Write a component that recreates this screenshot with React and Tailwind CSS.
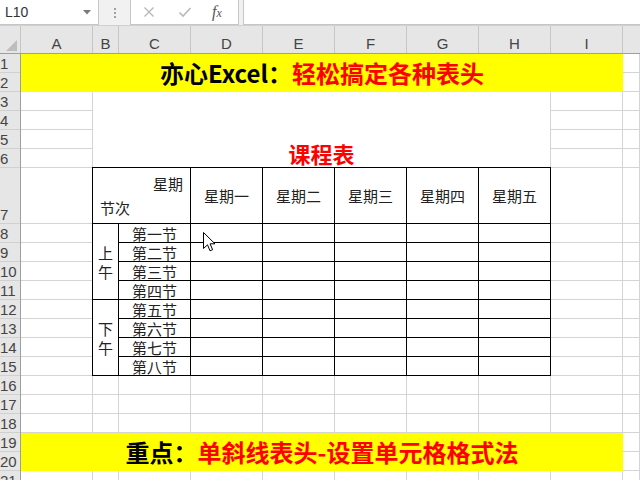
import React from 'react';

const colHeads = [
  { label: 'A', w: 'w-[72px]' },
  { label: 'B', w: 'w-[26px]' },
  { label: 'C', w: 'w-[72px]' },
  { label: 'D', w: 'w-[72px]' },
  { label: 'E', w: 'w-[72px]' },
  { label: 'F', w: 'w-[72px]' },
  { label: 'G', w: 'w-[72px]' },
  { label: 'H', w: 'w-[72px]' },
  { label: 'I', w: 'w-[72px]' },
];

const rowNums = Array.from({ length: 21 }, (_, i) => i + 1);
const days = ['星期一', '星期二', '星期三', '星期四', '星期五'];
const morning = ['第一节', '第二节', '第三节', '第四节'];
const afternoon = ['第五节', '第六节', '第七节', '第八节'];

// cells of the sheet not covered by merged blocks
const FILLERS = 83;

const TableBlock = () => (
  <div className="col-start-2 col-span-7 row-start-7 row-span-9 -ml-px -mt-px z-10 border-l border-t border-black bg-white grid grid-cols-[26px_repeat(6,72px)] grid-rows-[56px_repeat(8,19px)] text-[15px] text-[#222]">
    {/* header cell, no diagonal yet */}
    <div className="col-span-2 border-r border-b border-black flex flex-col justify-between px-[7px] pt-[8px] pb-[8px] leading-none">
      <span className="self-end">星期</span>
      <span className="self-start">节次</span>
    </div>
    {days.map(d => (
      <div key={d} className="border-r border-b border-black flex items-center justify-center leading-none">{d}</div>
    ))}

    <div className="col-start-1 row-start-2 row-span-4 border-r border-b border-black flex flex-col items-center justify-center leading-[19px]">
      <span>上</span>
      <span>午</span>
    </div>
    <div className="col-start-1 row-start-6 row-span-4 border-r border-b border-black flex flex-col items-center justify-center leading-[19px]">
      <span>下</span>
      <span>午</span>
    </div>

    {[...morning, ...afternoon].map(p => (
      <React.Fragment key={p}>
        <div className="col-start-2 border-r border-b border-black flex items-center justify-center leading-none pt-px">{p}</div>
        {days.map(d => <div key={d} className="border-r border-b border-black" />)}
      </React.Fragment>
    ))}
  </div>
);

const App = () => {
  return (
    <div className="relative w-[640px] h-[480px] overflow-hidden bg-white font-['Liberation_Sans','Noto_Sans_CJK_SC',sans-serif]">
      {/* formula bar */}
      <div className="h-[25px] bg-[#f1f1f1] flex">
        <div className="w-[99px] bg-white border-r border-b border-[#c6c6c6] flex items-center pl-[5px] text-[14px] text-[#333]">
          <span className="flex-1">L10</span>
          <svg width="8" height="5" viewBox="0 0 8 5" className="mr-[7px]">
            <path d="M0 0 L8 0 L4 4.5 Z" fill="#7a7a7a" />
          </svg>
        </div>
        <div className="w-[31px] flex flex-col items-center justify-center gap-[2px]">
          <span className="w-[2px] h-[2px] bg-[#a0a0a0]" />
          <span className="w-[2px] h-[2px] bg-[#a0a0a0]" />
          <span className="w-[2px] h-[2px] bg-[#a0a0a0]" />
        </div>
        <div className="w-[109px] bg-white border-l border-r border-b border-[#c6c6c6] flex items-center">
          <svg width="12" height="12" viewBox="0 0 12 12" className="ml-[12px]">
            <path d="M1.5 1.5 L10.5 10.5 M10.5 1.5 L1.5 10.5" stroke="#b9b9b9" strokeWidth="1.4" fill="none" />
          </svg>
          <svg width="14" height="12" viewBox="0 0 14 12" className="ml-[23px]">
            <path d="M1.5 6.5 L5 10 L12.5 2" stroke="#b9b9b9" strokeWidth="1.6" fill="none" />
          </svg>
          <span className="ml-[20px] font-['Liberation_Serif',serif] italic text-[16px] text-[#555] leading-none">
            f<span className="text-[12px]">x</span>
          </span>
        </div>
        <div className="w-[4px]" />
        <div className="flex-1 bg-white border-l border-b border-[#c6c6c6]" />
      </div>

      {/* column headers */}
      <div className="flex h-[29px] bg-[#e6e6e6] border-t border-b border-t-[#d0d0d0] border-b-[#9e9e9e] text-[15px] text-[#444] leading-none">
        <div className="w-[21px] border-r border-[#c6c6c6] flex items-end justify-end pr-[3px] pb-[2px]">
          <svg width="11" height="11" viewBox="0 0 11 11">
            <path d="M11 0 L11 11 L0 11 Z" fill="#bdbdbd" />
          </svg>
        </div>
        {colHeads.map(c => (
          <div key={c.label} className={`${c.w} border-r border-[#c6c6c6] flex items-end justify-center pb-[2px]`}>{c.label}</div>
        ))}
        <div className="flex-1" />
      </div>

      {/* body */}
      <div className="flex">
        <div className="w-[21px] shrink-0 bg-[#e6e6e6] border-r border-[#9e9e9e] text-[15px] text-[#444] leading-none">
          {rowNums.map(n => (
            <div key={n} className={`${n === 7 ? 'h-[56px]' : 'h-[19px]'} border-b border-[#d0d0d0] flex items-end pb-px`}>{n}</div>
          ))}
        </div>

        <div className="flex-1 grid grid-cols-[72px_26px_72px_72px_72px_72px_72px_72px_72px_1fr] grid-rows-[repeat(6,19px)_56px_repeat(14,19px)] font-['Noto_Sans_CJK_SC',sans-serif]">
          {Array.from({ length: FILLERS }, (_, i) => (
            <div key={i} className="border-r border-b border-[#d4d4d4]" />
          ))}

          <div className="col-start-1 col-span-9 row-start-1 row-span-2 bg-[#ffff00] flex items-center justify-center text-[24px] font-bold leading-none">
            <span className="text-black">亦心Excel：</span>
            <span className="text-[#ff0000]">轻松搞定各种表头</span>
          </div>

          <div className="col-start-2 col-span-7 row-start-3 row-span-4 bg-white border-r border-b border-[#d4d4d4] flex items-end justify-center pb-[3px] text-[22px] font-bold text-[#ff0000] leading-none">
            课程表
          </div>

          <TableBlock />

          <div className="col-start-1 col-span-9 row-start-19 row-span-2 bg-[#ffff00] flex items-center justify-center text-[24px] font-bold leading-none">
            <span className="text-black">重点：</span>
            <span className="text-[#ff0000]">单斜线表头-设置单元格格式法</span>
          </div>
        </div>
      </div>

      {/* mouse pointer */}
      <svg width="13" height="20" viewBox="0 0 13 20" className="absolute left-[203px] top-[232px] z-20">
        <path d="M0.5 0.5 L0.5 16.5 L4.5 12.8 L7 18.8 L9.6 17.7 L7.1 11.8 L12 11.8 Z" fill="#fff" stroke="#000" strokeWidth="1" strokeLinejoin="round" />
      </svg>
    </div>
  );
};

export default App;
